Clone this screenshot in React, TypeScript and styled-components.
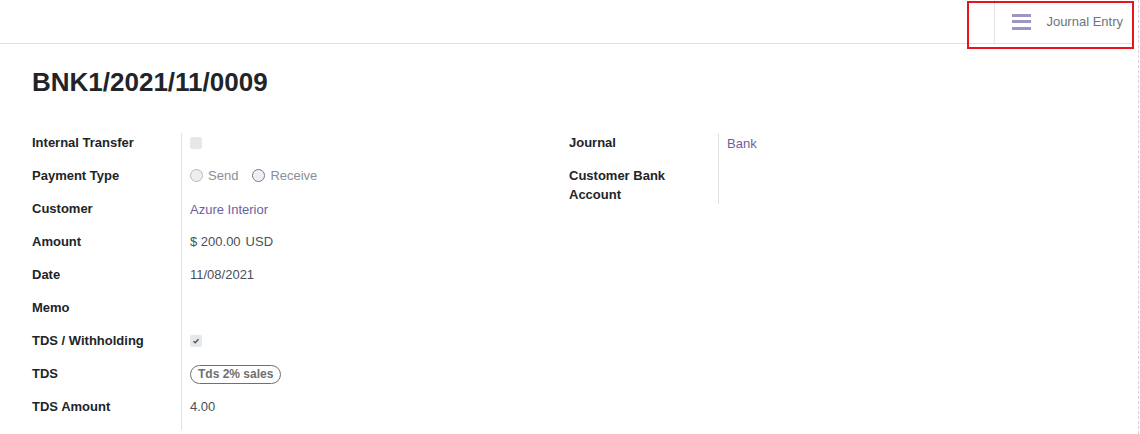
import React from "react";
import styled, { createGlobalStyle } from "styled-components";

const Global = createGlobalStyle`
  html, body { margin: 0; padding: 0; background: #fff; }
  body { font-family: "Liberation Sans", Arial, sans-serif; }
  * { box-sizing: border-box; }
`;

const Page = styled.div`
  position: relative;
  width: 1140px;
  height: 434px;
  overflow: hidden;
  background: #fff;
`;

const Frame = styled.div`
  width: 1139px;
  height: 434px;
  border-right: 1px dashed #d2d2dc;
`;

const Header = styled.header`
  height: 44px;
  border-bottom: 1px solid #dee2e6;
  display: flex;
  justify-content: flex-end;
  margin-right: 5px;
`;

const StatButton = styled.div`
  display: flex;
  align-items: center;
  height: 43px;
  border-left: 1px solid #e3e3e3;
  padding: 0 10px 0 17px;
  gap: 15px;
  font-size: 13px;
  color: #6c757d;
`;

const MenuIcon = styled.span`
  display: flex;
  flex-direction: column;
  gap: 3.5px;
  width: 19px;
  & > i {
    display: block;
    height: 3px;
    background: #9e95c4;
  }
`;

const Annotation = styled.div`
  position: absolute;
  left: 967px;
  top: 1px;
  width: 167px;
  height: 48px;
  border: 2px solid #e8141b;
  pointer-events: none;
`;

const Sheet = styled.main`
  padding: 23px 32px 0 32px;
`;

const Title = styled.h1`
  margin: 0;
  font-size: 26px;
  line-height: 31px;
  font-weight: 700;
  color: #212529;
`;

const Groups = styled.div`
  display: grid;
  grid-template-columns: 1fr 1fr;
  margin-top: 35px;
`;

const Group = styled.div`
  display: grid;
  grid-template-columns: 150px 1fr;
  align-content: start;
`;

const Label = styled.div<{ $last?: boolean }>`
  border-right: 1px solid #dee2e6;
  padding-bottom: ${(p) => (p.$last ? "0" : "14px")};
  padding-right: 16px;
  font-size: 13px;
  line-height: 19px;
  font-weight: 700;
  color: #212529;
`;

const Value = styled.div<{ $tone?: "link" | "muted" | "plain" }>`
  padding-left: 8px;
  padding-top: ${(p) => (p.$tone === "link" ? "1px" : "0")};
  font-size: 13px;
  line-height: 19px;
  display: flex;
  align-items: center;
  align-self: start;
  min-height: 19px;
  color: ${(p) =>
    p.$tone === "link" ? "#6d5f9e" : p.$tone === "muted" ? "#8a8f95" : "#495057"};
`;

const Checkbox = styled.span<{ $checked?: boolean }>`
  width: 12px;
  height: 12px;
  border-radius: 2px;
  background: #e5e8eb;
  display: inline-flex;
  align-items: center;
  justify-content: center;
  margin-top: ${(p) => (p.$checked ? "0" : "1px")};
`;

const RadioItem = styled.label`
  display: inline-flex;
  align-items: center;
  gap: 5px;
  margin-right: 14px;
`;

const Radio = styled.span<{ $active?: boolean }>`
  width: 13px;
  height: 13px;
  border-radius: 50%;
  background: #eceef0;
  border: 1px solid ${(p) => (p.$active ? "#7a7398" : "#b8bcc2")};
  box-shadow: ${(p) => (p.$active ? "inset 0 0 0 2px #f4f4f8" : "none")};
`;

const Tag = styled.span`
  display: inline-block;
  border: 1px solid #707070;
  border-radius: 10px;
  padding: 0 7px;
  font-size: 12px;
  line-height: 17px;
  font-weight: 700;
  color: #6f6f6f;
  margin-top: 1px;
`;

const Currency = styled.span`
  margin-left: 5px;
`;

export default function App() {
  return (
    <Page>
      <Global />
      <Frame>
        <Header>
          <StatButton>
            <MenuIcon>
              <i />
              <i />
              <i />
            </MenuIcon>
            <span>Journal Entry</span>
          </StatButton>
        </Header>
        <Sheet>
          <Title>BNK1/2021/11/0009</Title>
          <Groups>
            <Group>
              <Label>Internal Transfer</Label>
              <Value>
                <Checkbox />
              </Value>
              <Label>Payment Type</Label>
              <Value $tone="muted">
                <RadioItem>
                  <Radio />
                  Send
                </RadioItem>
                <RadioItem>
                  <Radio $active />
                  Receive
                </RadioItem>
              </Value>
              <Label>Customer</Label>
              <Value $tone="link">Azure Interior</Value>
              <Label>Amount</Label>
              <Value>
                $ 200.00<Currency>USD</Currency>
              </Value>
              <Label>Date</Label>
              <Value>11/08/2021</Value>
              <Label>Memo</Label>
              <Value />
              <Label>TDS / Withholding</Label>
              <Value>
                <Checkbox $checked>
                  <svg width="8" height="8" viewBox="0 0 8 8">
                    <path d="M1.5 4.2 L3.2 5.8 L6.5 2.3" fill="none" stroke="#555" strokeWidth="1.4" />
                  </svg>
                </Checkbox>
              </Value>
              <Label>TDS</Label>
              <Value>
                <Tag>Tds 2% sales</Tag>
              </Value>
              <Label>TDS Amount</Label>
              <Value>4.00</Value>
            </Group>
            <Group>
              <Label>Journal</Label>
              <Value $tone="link">Bank</Value>
              <Label $last>Customer Bank Account</Label>
              <Value />
            </Group>
          </Groups>
        </Sheet>
      </Frame>
      <Annotation />
    </Page>
  );
}
